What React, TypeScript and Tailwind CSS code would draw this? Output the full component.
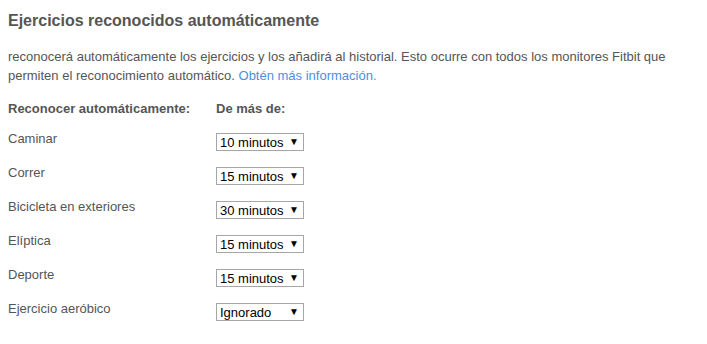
import React from 'react';

const rows = [
  { label: 'Caminar', value: '10 minutos' },
  { label: 'Correr', value: '15 minutos' },
  { label: 'Bicicleta en exteriores', value: '30 minutos' },
  { label: 'Elíptica', value: '15 minutos' },
  { label: 'Deporte', value: '15 minutos' },
  { label: 'Ejercicio aeróbico', value: 'Ignorado' },
];

function FakeSelect({ value }: { value: string }) {
  return (
    <div className="mt-[2px] w-[88px] h-[18px] border border-[#a6a6a6] bg-white flex items-center justify-between pl-[3px] pr-[4px] text-[13px] leading-none text-black">
      <span>{value}</span>
      <span className="text-[10px]">▼</span>
    </div>
  );
}

export default function App() {
  return (
    <div className="w-[707px] h-[344px] bg-white pl-2 pt-[11px] text-[#555] font-['Liberation_Sans',Arial,sans-serif]">
      <h2 className="text-[16px] leading-[20px] font-bold">Ejercicios reconocidos automáticamente</h2>

      <p className="mt-[16px] text-[13px] leading-[19px] pr-4">
        reconocerá automáticamente los ejercicios y los añadirá al historial. Esto ocurre con todos los monitores Fitbit que
        permiten el reconocimiento automático. <a className="text-[#4a8fe3]">Obtén más información.</a>
      </p>

      <div className="mt-[16px] flex text-[13px] leading-[16px] font-bold">
        <div className="w-[208px]">Reconocer automáticamente:</div>
        <div>De más de:</div>
      </div>

      <div className="mt-[14px] flex flex-col gap-[14px]">
        {rows.map((r) => (
          <div key={r.label} className="flex items-start text-[13px] leading-[16px]">
            <div className="w-[208px]">{r.label}</div>
            <FakeSelect value={r.value} />
          </div>
        ))}
      </div>
    </div>
  );
}
